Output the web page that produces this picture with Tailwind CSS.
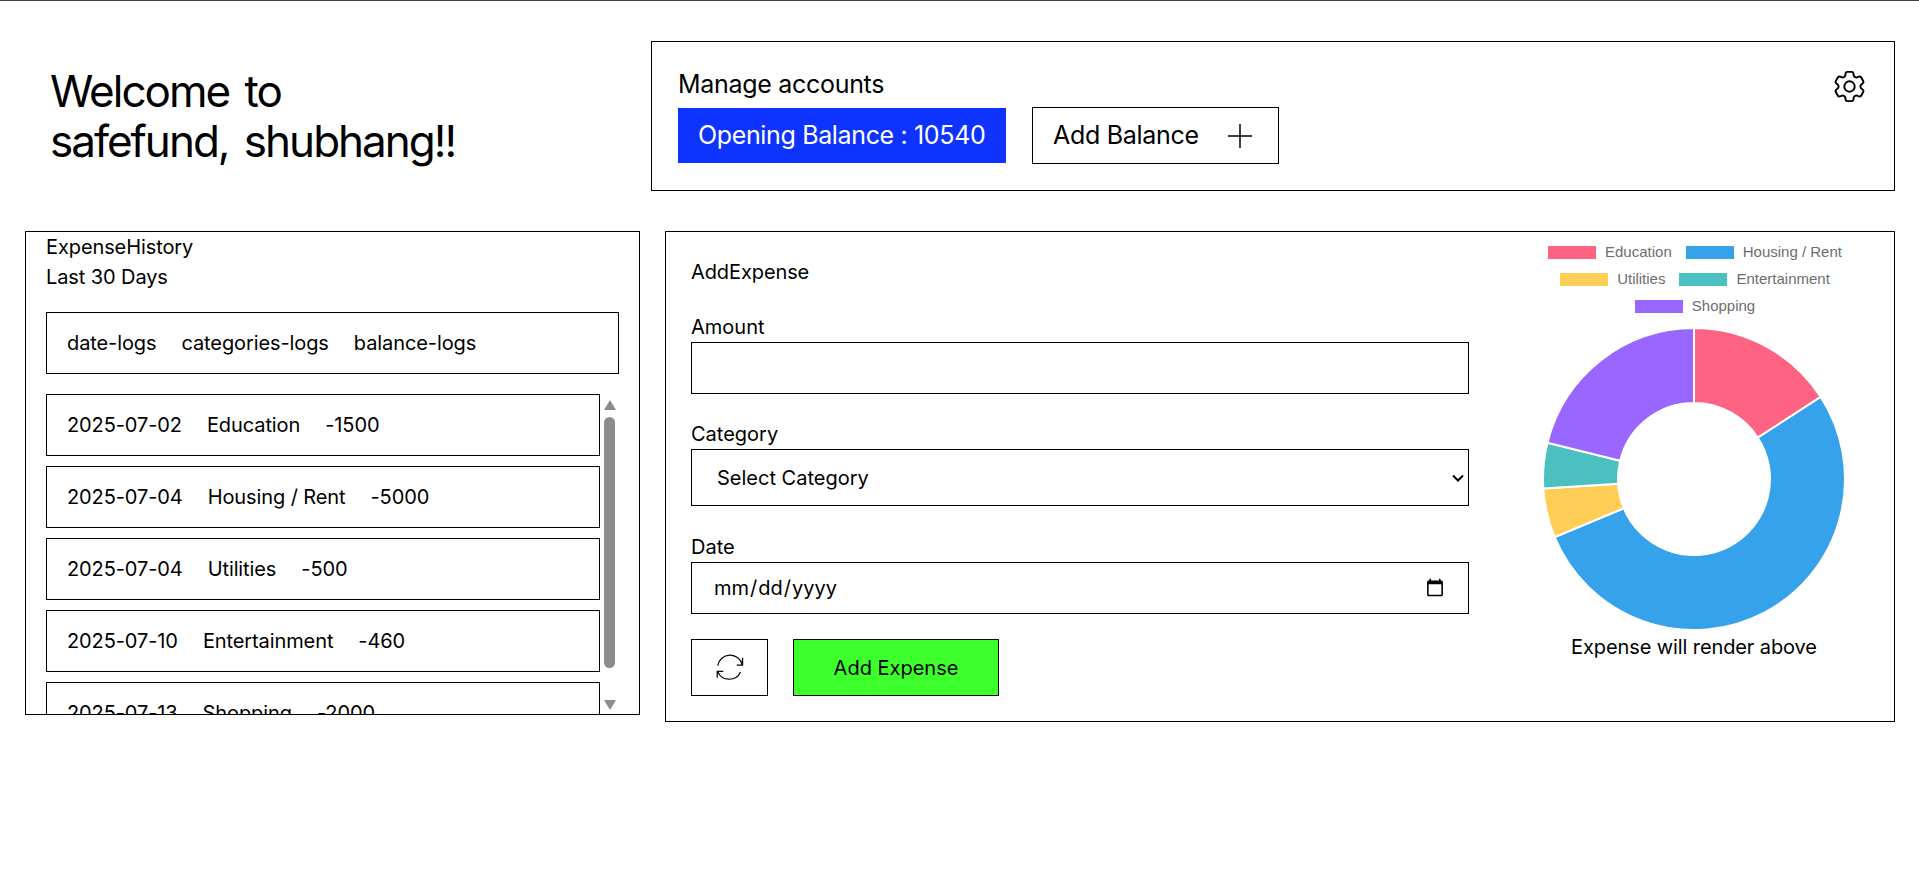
<!DOCTYPE html>
<html lang="en">
<head>
    <meta charset="UTF-8">
    <meta name="viewport" content="width=device-width, initial-scale=1.0">
    <title>safefund</title>
    <script src="https://cdn.jsdelivr.net/npm/@tailwindcss/browser@4"></script>
</head>
<body class="bg-white text-black font-['Inter',sans-serif] border-t border-[#444] overflow-hidden h-[870px]">
    <!-- top row -->
    <div class="flex mt-[40px] h-[150px]">
        <div class="w-[651px] pl-[50px] flex items-center">
            <h1 class="text-[44px] leading-[50px] tracking-[-2px] [word-spacing:5px] font-normal">Welcome to<br>safefund, shubhang!!</h1>
        </div>
        <div class="relative w-[1244px] border border-black pl-[26px] pt-[27px]">
            <p class="text-[25px] tracking-[-0.3px] leading-[30px] mb-[8px]">Manage accounts</p>
            <div class="flex items-center gap-[26px]">
                <div class="bg-[#0f33ff] text-white text-[25px] tracking-[-0.35px] w-[328px] h-[55px] flex items-center pl-[20px]">Opening Balance : 10540</div>
                <button class="border border-black w-[247px] h-[57px] flex items-center pl-[20px] text-[25px] tracking-[-0.3px]">
                    Add Balance
                    <svg class="ml-[29px] w-[24px] h-[24px]" viewBox="0 0 24 24" fill="none" stroke="black" stroke-width="1.5"><path d="M12 0v24M0 12h24"/></svg>
                </button>
            </div>
            <svg class="absolute right-[25px] top-[25px] w-[39px] h-[39px]" viewBox="0 0 24 24" fill="none" stroke="black" stroke-width="1.2" stroke-linecap="round" stroke-linejoin="round"><path d="M9.594 3.94c.09-.542.56-.94 1.11-.94h2.593c.55 0 1.02.398 1.11.94l.213 1.281c.063.374.313.686.645.87.074.04.147.083.22.127.325.196.72.257 1.075.124l1.217-.456a1.125 1.125 0 0 1 1.37.49l1.296 2.247a1.125 1.125 0 0 1-.26 1.431l-1.003.827c-.293.241-.438.613-.43.992a7.723 7.723 0 0 1 0 .255c-.008.378.137.75.43.991l1.004.827c.424.35.534.955.26 1.43l-1.298 2.247a1.125 1.125 0 0 1-1.369.491l-1.217-.456c-.355-.133-.75-.072-1.076.124a6.47 6.47 0 0 1-.22.128c-.331.183-.581.495-.644.869l-.213 1.281c-.09.543-.56.94-1.11.94h-2.594c-.55 0-1.019-.398-1.11-.94l-.213-1.281c-.062-.374-.312-.686-.644-.87a6.52 6.52 0 0 1-.22-.127c-.325-.196-.72-.257-1.076-.124l-1.217.456a1.125 1.125 0 0 1-1.369-.49l-1.297-2.247a1.125 1.125 0 0 1 .26-1.431l1.004-.827c.292-.24.437-.613.43-.991a6.932 6.932 0 0 1 0-.255c.007-.38-.138-.751-.43-.992l-1.004-.827a1.125 1.125 0 0 1-.26-1.43l1.297-2.247a1.125 1.125 0 0 1 1.37-.491l1.216.456c.356.133.751.072 1.076-.124.072-.044.146-.086.22-.128.332-.183.582-.495.644-.869l.214-1.28Z"/><circle cx="12" cy="12" r="3.2"/></svg>
        </div>
    </div>

    <!-- bottom row -->
    <div class="flex items-start mt-[40px] pl-[25px] gap-[25px]">
        <!-- expense history -->
        <div class="w-[615px] h-[484px] border border-black overflow-hidden pl-[20px] text-[20px] tracking-[-0.1px]">
            <p class="leading-[30px]">ExpenseHistory</p>
            <p class="leading-[30px]">Last 30 Days</p>
            <div class="w-[573px] h-[62px] border border-black mt-[20px] flex items-center gap-[25px] pl-[20px]">
                <span>date-logs</span><span>categories-logs</span><span>balance-logs</span>
            </div>
            <div class="flex mt-[20px]">
                <div class="w-[554px] flex flex-col gap-[10px]">
                    <div class="h-[62px] shrink-0 border border-black flex items-center gap-[25px] pl-[20px]"><span>2025-07-02</span><span>Education</span><span>-1500</span></div>
                    <div class="h-[62px] shrink-0 border border-black flex items-center gap-[25px] pl-[20px]"><span>2025-07-04</span><span>Housing / Rent</span><span>-5000</span></div>
                    <div class="h-[62px] shrink-0 border border-black flex items-center gap-[25px] pl-[20px]"><span>2025-07-04</span><span>Utilities</span><span>-500</span></div>
                    <div class="h-[62px] shrink-0 border border-black flex items-center gap-[25px] pl-[20px]"><span>2025-07-10</span><span>Entertainment</span><span>-460</span></div>
                    <div class="h-[62px] shrink-0 border border-black flex items-center gap-[25px] pl-[20px]"><span>2025-07-13</span><span>Shopping</span><span>-2000</span></div>
                </div>
                <!-- scrollbar -->
                <div class="w-[11px] h-[320px] ml-[4px] flex flex-col items-center">
                    <div class="mt-[6px] w-0 h-0 border-x-[6px] border-x-transparent border-b-[10px] border-b-[#8c8c8c]"></div>
                    <div class="mt-[7px] w-[11px] h-[251px] rounded-full bg-[#8c8c8c]"></div>
                    <div class="mt-[32px] w-0 h-0 border-x-[6px] border-x-transparent border-t-[10px] border-t-[#8c8c8c]"></div>
                </div>
            </div>
        </div>

        <!-- add expense -->
        <div class="relative w-[1230px] h-[491px] border border-black pl-[25px]">
            <div class="w-[778px]">
                <p class="text-[20px] tracking-[-0.1px] leading-[24px] mt-[28px]">AddExpense</p>
                <label class="block text-[20px] leading-[24px] mt-[31px]">Amount</label>
                <input type="text" class="block w-full h-[52px] mt-[3px] border border-black">
                <label class="block text-[20px] leading-[24px] mt-[28px]">Category</label>
                <div class="relative mt-[3px]">
                    <select class="block w-full h-[57px] border border-black pl-[25px] pr-[5px] text-[20px] appearance-none">
                        <option>Select Category</option>
                    </select>
                    <svg class="absolute right-[5px] top-[25px] w-[12px] h-[8px]" viewBox="0 0 12 8" fill="none" stroke="black" stroke-width="2"><path d="M1 1.5l5 5 5-5"/></svg>
                </div>
                <label class="block text-[20px] leading-[24px] mt-[29px]">Date</label>
                <input type="date" class="block w-full h-[52px] mt-[3px] border border-black px-[21px] text-[20px]">
                <div class="flex gap-[25px] mt-[25px]">
                    <button class="w-[77px] h-[57px] border border-black flex items-center justify-center">
                        <svg class="w-[50px] h-[46px]" viewBox="0 0 50 46" fill="none" stroke="black" stroke-width="1.2"><path d="M12.7 20.7A12.5 12.5 0 0 1 37.3 20M31.7 20.2H37.6V12.7M35.5 27A12.5 12.5 0 0 1 12.7 26.7M18.3 26.3H12.2V32.7"/></svg>
                    </button>
                    <button class="w-[206px] h-[57px] border border-black bg-[#3dff2b] text-[20px]">Add Expense</button>
                </div>
            </div>
            <!-- chart -->
            <div class="absolute left-[828px] top-0 w-[400px] text-center">
                <div class="mt-[10px] pl-[2px] flex flex-col items-center gap-[7px] font-['Liberation_Sans',sans-serif] text-[15px] leading-[20px] text-[#6e6e6e]">
                    <div class="flex gap-[14px]">
                        <span class="flex items-center gap-[9px]"><i class="w-[48px] h-[13px] bg-[#FF6384]"></i>Education</span>
                        <span class="flex items-center gap-[9px]"><i class="w-[48px] h-[13px] bg-[#36A2EB]"></i>Housing / Rent</span>
                    </div>
                    <div class="flex gap-[14px]">
                        <span class="flex items-center gap-[9px]"><i class="w-[48px] h-[13px] bg-[#FFCE56]"></i>Utilities</span>
                        <span class="flex items-center gap-[9px]"><i class="w-[48px] h-[13px] bg-[#4BC0C0]"></i>Entertainment</span>
                    </div>
                    <div class="flex gap-[14px]">
                        <span class="flex items-center gap-[9px]"><i class="w-[48px] h-[13px] bg-[#9966FF]"></i>Shopping</span>
                    </div>
                </div>
                <svg id="donut" class="block mx-auto mt-[10px]" width="306" height="306" viewBox="-153 -153 306 306"></svg>
                <p class="text-[20px] tracking-[-0.1px] leading-[24px] mt-[3px]">Expense will render above</p>
            </div>
        </div>
    </div>

    <script>
        const slices = [
            [1500, '#FF6384'],
            [5000, '#36A2EB'],
            [500, '#FFCE56'],
            [460, '#4BC0C0'],
            [2000, '#9966FF'],
        ];
        const total = slices.reduce((sum, s) => sum + s[0], 0);
        const point = (r, a) => `${(r * Math.sin(a)).toFixed(2)} ${(-r * Math.cos(a)).toFixed(2)}`;
        let angle = 0;
        let html = '';
        slices.forEach(([value, color]) => {
            const next = angle + (value / total) * Math.PI * 2;
            const big = next - angle > Math.PI ? 1 : 0;
            html += `<path fill="${color}" stroke="#fff" stroke-width="2" d="M${point(151, angle)} A151 151 0 ${big} 1 ${point(151, next)} L${point(76, next)} A76 76 0 ${big} 0 ${point(76, angle)} Z"/>`;
            angle = next;
        });
        document.getElementById('donut').innerHTML = html;
    </script>
</body>
</html>
